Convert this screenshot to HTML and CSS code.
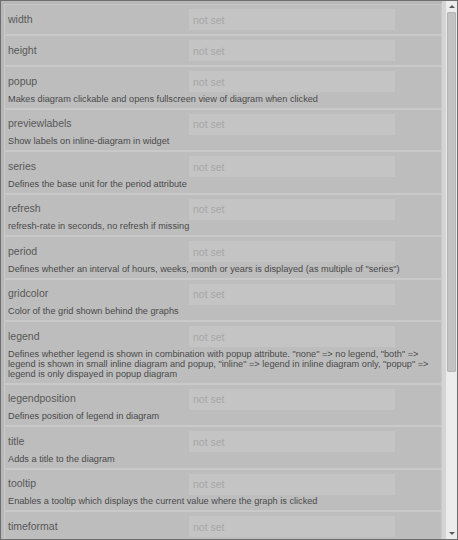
FILE: index.html
```html
<!DOCTYPE html>
<html>
<head>
<meta charset="utf-8">
<link rel="stylesheet" href="styles.css">
</head>
<body>
<div class="frame">
  <div class="list">
    <div class="row"><div class="line"><span class="label">width</span><input class="field" placeholder="not set"></div></div>
    <div class="row"><div class="line"><span class="label">height</span><input class="field" placeholder="not set"></div></div>
    <div class="row"><div class="line"><span class="label">popup</span><input class="field" placeholder="not set"></div><p class="desc">Makes diagram clickable and opens fullscreen view of diagram when clicked</p></div>
    <div class="row"><div class="line"><span class="label">previewlabels</span><input class="field" placeholder="not set"></div><p class="desc">Show labels on inline-diagram in widget</p></div>
    <div class="row"><div class="line"><span class="label">series</span><input class="field" placeholder="not set"></div><p class="desc">Defines the base unit for the period attribute</p></div>
    <div class="row"><div class="line"><span class="label">refresh</span><input class="field" placeholder="not set"></div><p class="desc">refresh-rate in seconds, no refresh if missing</p></div>
    <div class="row"><div class="line"><span class="label">period</span><input class="field" placeholder="not set"></div><p class="desc">Defines whether an interval of hours, weeks, month or years is displayed (as multiple of "series")</p></div>
    <div class="row"><div class="line"><span class="label">gridcolor</span><input class="field" placeholder="not set"></div><p class="desc">Color of the grid shown behind the graphs</p></div>
    <div class="row"><div class="line"><span class="label">legend</span><input class="field" placeholder="not set"></div><p class="desc">Defines whether legend is shown in combination with popup attribute. "none" =&gt; no legend, "both" =&gt; legend is shown in small inline diagram and popup, "inline" =&gt; legend in inline diagram only, "popup" =&gt; legend is only dispayed in popup diagram</p></div>
    <div class="row"><div class="line"><span class="label">legendposition</span><input class="field" placeholder="not set"></div><p class="desc">Defines position of legend in diagram</p></div>
    <div class="row"><div class="line"><span class="label">title</span><input class="field" placeholder="not set"></div><p class="desc">Adds a title to the diagram</p></div>
    <div class="row"><div class="line"><span class="label">tooltip</span><input class="field" placeholder="not set"></div><p class="desc">Enables a tooltip which displays the current value where the graph is clicked</p></div>
    <div class="row"><div class="line"><span class="label">timeformat</span><input class="field" placeholder="not set"></div></div>
  </div>
  <div class="scrollbar">
    <div class="btn"><span class="arrow-up"></span></div>
    <div class="track"><div class="thumb"></div></div>
    <div class="btn"><span class="arrow-down"></span></div>
  </div>
</div>
</body>
</html>
```
FILE: styles.css
```css
* { box-sizing: border-box; }
html, body { margin: 0; padding: 0; background: #b9b9b9; }
body { font-family: "Liberation Sans", Arial, sans-serif; }

.frame {
  width: 458px;
  height: 540px;
  border: 1px solid #6e6e6e;
  background: #b8b8b8;
  display: flex;
  overflow: hidden;
}

.list {
  flex: 1;
  padding: 3px 0 0 3px;
  overflow: hidden;
}

.row {
  background: #bdbdbd;
  border: 1px solid #c9c9c9;
  padding: 4px 3px 4px 3px;
}

.line {
  display: flex;
  align-items: center;
  height: 21px;
}

.label {
  width: 181px;
  font-size: 10.5px;
  color: #585858;
  margin-top: -2px;
}

.field {
  width: 206px;
  height: 21px;
  margin: 0;
  border: none;
  background: #c4c4c4;
  padding: 0 4px;
  font-family: "Liberation Sans", Arial, sans-serif;
  font-size: 10.5px;
  color: #5b5b5b;
  outline: none;
}
.field::placeholder { color: #a7a7a7; }

.desc {
  margin: 1.5px 0 0 0;
  font-size: 9.2px;
  line-height: 10px;
  color: #4a4a4a;
}

.scrollbar {
  width: 15px;
  border-left: 4px solid #d4d4d4;
  background: #ececec;
  display: flex;
  flex-direction: column;
}

.btn {
  height: 11px;
  display: flex;
  align-items: center;
  justify-content: center;
}

.arrow-up {
  width: 0; height: 0;
  border-left: 3px solid transparent;
  border-right: 3px solid transparent;
  border-bottom: 3px solid #5a5a5a;
}
.arrow-down {
  width: 0; height: 0;
  border-left: 3px solid transparent;
  border-right: 3px solid transparent;
  border-top: 3px solid #5a5a5a;
}

.track {
  flex: 1;
  padding: 0 1px;
}

.thumb {
  height: 360px;
  background: #c2c2c2;
  border: 1px solid #b4b4b4;
  border-radius: 1px;
}
```
